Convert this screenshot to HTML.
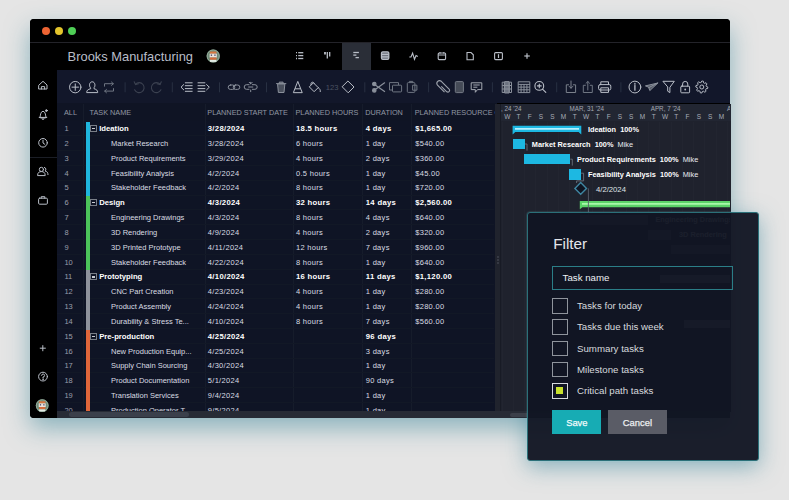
<!DOCTYPE html>
<html><head><meta charset="utf-8">
<style>
*{margin:0;padding:0;box-sizing:border-box}
html,body{width:789px;height:500px;overflow:hidden;background:#e5e5e5;font-family:"Liberation Sans",sans-serif}
.abs{position:absolute}
#shadow{position:absolute;left:30px;top:19px;width:700px;height:399px;border-radius:4px;background:#000;box-shadow:0 10px 24px rgba(50,130,150,0.5);}
#win{position:absolute;left:30px;top:19px;width:700px;height:399px;border-radius:4px;background:#000;overflow:hidden}
#titlesep{position:absolute;left:30px;top:42px;width:700px;height:1px;background:#232329}
.tl{position:absolute;top:27px;width:8px;height:8px;border-radius:50%}
#brand{position:absolute;left:67.6px;top:48px;font-size:12.9px;color:#b9bec8;line-height:17px;white-space:nowrap}
#toolbar{position:absolute;left:57px;top:70px;width:673px;height:33px;background:#12172a}
#gridhdr{position:absolute;left:57px;top:103px;width:440px;height:18px;background:#0f1424}
#gridbody{position:absolute;left:57px;top:121px;width:440px;height:290px;background:#0f1425}
#splitter{position:absolute;left:495px;top:103.5px;width:5.5px;height:307.5px;background:#20232d;border-right:1px solid #181b25}
#gantt{position:absolute;left:500px;top:103.5px;width:230.5px;height:308px;background:#1f222d}
#ganttHdr{position:absolute;left:500px;top:103.5px;width:230.5px;height:17.5px;background:#222632}
#hscroll{position:absolute;left:57px;top:411px;width:673px;height:7px;background:#272b35}
#hthumb{position:absolute;left:69px;top:412px;width:120px;height:5px;border-radius:3px;background:#3b404b}
.hd{position:absolute;top:89px;font-size:7.3px;line-height:8px;color:#9197a3;white-space:nowrap}
.r{position:absolute;font-size:7.5px;line-height:14.82px;color:#dadde3;white-space:nowrap}
.b{font-weight:bold;color:#fff;font-size:7.7px}
.d{letter-spacing:0.3px}
.num{position:absolute;left:64.4px;font-size:7.5px;line-height:14.82px;color:#9a9fab}
.cb{position:absolute;left:86.3px;width:3.3px;height:14.92px}
.box{position:absolute;left:90.2px;width:6.8px;height:7px;border:0.9px solid #7a7f88}
.box:after{content:"";position:absolute;left:0.9px;top:2.1px;width:3.2px;height:1.1px;background:#c9ccd2}
.rl{position:absolute;left:57px;width:437px;height:1px;background:#121826}
.coldiv{position:absolute;top:104px;width:1px;height:307px;background:#161c2b}
.wd{position:absolute;top:113px;width:11.27px;text-align:center;font-size:6.5px;line-height:8px;color:#a8adb8}
.gl{position:absolute;font-size:7.35px;line-height:14.8px;color:#e9ecf0;white-space:nowrap}
.gl b{font-weight:bold;color:#fff}
.gd{position:absolute;top:105px;font-size:6.3px;line-height:8px;color:#a3a8b3;white-space:nowrap}
#dshadow{position:absolute;left:526.5px;top:211.5px;width:232.5px;height:249px;border-radius:3px;background:transparent;box-shadow:0 6px 22px rgba(60,135,155,0.55)}
#dlg{position:absolute;left:526.5px;top:211.5px;width:232.5px;height:249px;border:1.4px solid #2b7079;border-radius:3px;background:rgba(17,21,35,0.955);box-shadow:0 0 1.5px rgba(130,215,225,0.6)}
#ftitle{position:absolute;left:553.2px;top:234.6px;font-size:15.3px;line-height:18px;color:#e3e6ea}
#finput{position:absolute;left:552.2px;top:265.6px;width:180.7px;height:24px;border:1.4px solid #2b7e87;font-size:9.7px;line-height:21.2px;padding-left:9.4px;color:#eef0f3}
.chk{position:absolute;left:552.2px;width:15.7px;height:15.6px;border:1.3px solid #8f949c}
.chk.on{border-color:#d6d9de}
.chk.on:after{content:"";position:absolute;left:3.3px;top:3.3px;width:6.5px;height:6.5px;background:#c9e22c}
.fl{position:absolute;left:577px;font-size:9.7px;line-height:15.6px;color:#d7dade;white-space:nowrap}
#save{position:absolute;left:552.4px;top:410.2px;width:48.9px;height:23.6px;background:#17acb4;color:#f2fbfb;font-size:9.4px;-webkit-text-stroke:0.25px #f2fbfb;line-height:25.4px;text-align:center}
#cancel{position:absolute;left:607.9px;top:410.2px;width:59px;height:23.6px;background:#5a5c66;color:#eceef0;font-size:9.4px;-webkit-text-stroke:0.25px #eceef0;line-height:25.4px;text-align:center}
.vl{position:absolute;top:121.5px;width:1px;height:290px;background:#222530}
</style></head><body>
<div id="dshadow"></div>
<div id="shadow"></div>
<div id="win"></div>
  <div class="tl" style="left:42px;background:#ee6433"></div>
  <div class="tl" style="left:55px;background:#e4c52c"></div>
  <div class="tl" style="left:68px;background:#4fcf56"></div>
  <div id="titlesep"></div>
  <div id="brand">Brooks Manufacturing</div>
  <div id="toolbar"></div>
  <div id="gridhdr"></div>
  <div id="gridbody"></div>
  <div id="gantt"></div>
  <div id="ganttHdr"></div>
  <div id="splitter"></div>
  <div id="hscroll"></div>
  <div id="hthumb"></div>
  <div class="abs" style="left:497.2px;top:256.3px;width:1.8px;height:1.8px;border-radius:50%;background:#3d404b"></div>
  <div class="abs" style="left:497.2px;top:259.3px;width:1.8px;height:1.8px;border-radius:50%;background:#3d404b"></div>
  <div class="abs" style="left:497.2px;top:262.3px;width:1.8px;height:1.8px;border-radius:50%;background:#3d404b"></div>
  <div class="abs" style="left:510px;top:413.2px;width:60px;height:3.8px;border-radius:2px;background:#3b3f49"></div>
  <div class="abs" style="left:342.3px;top:42.5px;width:28.4px;height:27.5px;background:#2a2e37"></div>
  <div class="abs" style="left:30px;top:157px;width:27px;height:1px;background:#1b1e26"></div>
  <div class="coldiv" style="left:82.9px"></div>
  <div class="coldiv" style="left:204.6px"></div>
  <div class="coldiv" style="left:293px"></div>
  <div class="coldiv" style="left:362px"></div>
  <div class="coldiv" style="left:410.5px"></div>
<div class="abs" style="left:0;top:0;width:495px;height:500px;overflow:hidden">
  <div class="hd" style="left:64px;top:108.8px">ALL</div>
  <div class="hd" style="left:89.5px;top:108.8px">TASK NAME</div>
  <div class="hd" style="left:207.3px;top:108.8px">PLANNED START DATE</div>
  <div class="hd" style="left:295.5px;top:108.8px">PLANNED HOURS</div>
  <div class="hd" style="left:365.3px;top:108.8px">DURATION</div>
  <div class="hd" style="left:414.7px;top:108.8px">PLANNED RESOURCE C</div>
</div>
<div class="abs" style="left:0;top:0;width:789px;height:411px;overflow:hidden">
<div class="rl" style="top:135.32px"></div>
<div class="num" style="top:122.20px">1</div>
<div class="cb" style="top:122.20px;background:#1fb6de"></div>
<div class="box" style="top:125.20px"></div>
<div class="r b" style="top:122.20px;left:99.2px">Ideation</div>
<div class="r b d" style="top:122.20px;left:207.8px">3/28/2024</div>
<div class="r b d" style="top:122.20px;left:296px">18.5 hours</div>
<div class="r b d" style="top:122.20px;left:365.8px">4 days</div>
<div class="r b d" style="top:122.20px;left:415.2px">$1,665.00</div>
<div class="rl" style="top:150.14px"></div>
<div class="num" style="top:137.02px">2</div>
<div class="cb" style="top:137.02px;background:#1fb6de"></div>
<div class="r" style="top:137.02px;left:111px">Market Research</div>
<div class="r d" style="top:137.02px;left:207.8px">3/28/2024</div>
<div class="r d" style="top:137.02px;left:296px">6 hours</div>
<div class="r d" style="top:137.02px;left:365.8px">1 day</div>
<div class="r d" style="top:137.02px;left:415.2px">$540.00</div>
<div class="rl" style="top:164.96px"></div>
<div class="num" style="top:151.84px">3</div>
<div class="cb" style="top:151.84px;background:#1fb6de"></div>
<div class="r" style="top:151.84px;left:111px">Product Requirements</div>
<div class="r d" style="top:151.84px;left:207.8px">3/29/2024</div>
<div class="r d" style="top:151.84px;left:296px">4 hours</div>
<div class="r d" style="top:151.84px;left:365.8px">2 days</div>
<div class="r d" style="top:151.84px;left:415.2px">$360.00</div>
<div class="rl" style="top:179.78px"></div>
<div class="num" style="top:166.66px">4</div>
<div class="cb" style="top:166.66px;background:#1fb6de"></div>
<div class="r" style="top:166.66px;left:111px">Feasibility Analysis</div>
<div class="r d" style="top:166.66px;left:207.8px">4/2/2024</div>
<div class="r d" style="top:166.66px;left:296px">0.5 hours</div>
<div class="r d" style="top:166.66px;left:365.8px">1 day</div>
<div class="r d" style="top:166.66px;left:415.2px">$45.00</div>
<div class="rl" style="top:194.60px"></div>
<div class="num" style="top:181.48px">5</div>
<div class="cb" style="top:181.48px;background:#1fb6de"></div>
<div class="r" style="top:181.48px;left:111px">Stakeholder Feedback</div>
<div class="r d" style="top:181.48px;left:207.8px">4/2/2024</div>
<div class="r d" style="top:181.48px;left:296px">8 hours</div>
<div class="r d" style="top:181.48px;left:365.8px">1 day</div>
<div class="r d" style="top:181.48px;left:415.2px">$720.00</div>
<div class="rl" style="top:209.42px"></div>
<div class="num" style="top:196.30px">6</div>
<div class="cb" style="top:196.30px;background:#4cc35a"></div>
<div class="box" style="top:199.30px"></div>
<div class="r b" style="top:196.30px;left:99.2px">Design</div>
<div class="r b d" style="top:196.30px;left:207.8px">4/3/2024</div>
<div class="r b d" style="top:196.30px;left:296px">32 hours</div>
<div class="r b d" style="top:196.30px;left:365.8px">14 days</div>
<div class="r b d" style="top:196.30px;left:415.2px">$2,560.00</div>
<div class="rl" style="top:224.24px"></div>
<div class="num" style="top:211.12px">7</div>
<div class="cb" style="top:211.12px;background:#4cc35a"></div>
<div class="r" style="top:211.12px;left:111px">Engineering Drawings</div>
<div class="r d" style="top:211.12px;left:207.8px">4/3/2024</div>
<div class="r d" style="top:211.12px;left:296px">8 hours</div>
<div class="r d" style="top:211.12px;left:365.8px">4 days</div>
<div class="r d" style="top:211.12px;left:415.2px">$640.00</div>
<div class="rl" style="top:239.06px"></div>
<div class="num" style="top:225.94px">8</div>
<div class="cb" style="top:225.94px;background:#4cc35a"></div>
<div class="r" style="top:225.94px;left:111px">3D Rendering</div>
<div class="r d" style="top:225.94px;left:207.8px">4/9/2024</div>
<div class="r d" style="top:225.94px;left:296px">4 hours</div>
<div class="r d" style="top:225.94px;left:365.8px">2 days</div>
<div class="r d" style="top:225.94px;left:415.2px">$320.00</div>
<div class="rl" style="top:253.88px"></div>
<div class="num" style="top:240.76px">9</div>
<div class="cb" style="top:240.76px;background:#4cc35a"></div>
<div class="r" style="top:240.76px;left:111px">3D Printed Prototype</div>
<div class="r d" style="top:240.76px;left:207.8px">4/11/2024</div>
<div class="r d" style="top:240.76px;left:296px">12 hours</div>
<div class="r d" style="top:240.76px;left:365.8px">7 days</div>
<div class="r d" style="top:240.76px;left:415.2px">$960.00</div>
<div class="rl" style="top:268.70px"></div>
<div class="num" style="top:255.58px">10</div>
<div class="cb" style="top:255.58px;background:#4cc35a"></div>
<div class="r" style="top:255.58px;left:111px">Stakeholder Feedback</div>
<div class="r d" style="top:255.58px;left:207.8px">4/22/2024</div>
<div class="r d" style="top:255.58px;left:296px">8 hours</div>
<div class="r d" style="top:255.58px;left:365.8px">1 day</div>
<div class="r d" style="top:255.58px;left:415.2px">$640.00</div>
<div class="rl" style="top:283.52px"></div>
<div class="num" style="top:270.40px">11</div>
<div class="cb" style="top:270.40px;background:#8e929b"></div>
<div class="box" style="top:273.40px"></div>
<div class="r b" style="top:270.40px;left:99.2px">Prototyping</div>
<div class="r b d" style="top:270.40px;left:207.8px">4/10/2024</div>
<div class="r b d" style="top:270.40px;left:296px">16 hours</div>
<div class="r b d" style="top:270.40px;left:365.8px">11 days</div>
<div class="r b d" style="top:270.40px;left:415.2px">$1,120.00</div>
<div class="rl" style="top:298.34px"></div>
<div class="num" style="top:285.22px">12</div>
<div class="cb" style="top:285.22px;background:#8e929b"></div>
<div class="r" style="top:285.22px;left:111px">CNC Part Creation</div>
<div class="r d" style="top:285.22px;left:207.8px">4/23/2024</div>
<div class="r d" style="top:285.22px;left:296px">4 hours</div>
<div class="r d" style="top:285.22px;left:365.8px">1 day</div>
<div class="r d" style="top:285.22px;left:415.2px">$280.00</div>
<div class="rl" style="top:313.16px"></div>
<div class="num" style="top:300.04px">13</div>
<div class="cb" style="top:300.04px;background:#8e929b"></div>
<div class="r" style="top:300.04px;left:111px">Product Assembly</div>
<div class="r d" style="top:300.04px;left:207.8px">4/24/2024</div>
<div class="r d" style="top:300.04px;left:296px">4 hours</div>
<div class="r d" style="top:300.04px;left:365.8px">1 day</div>
<div class="r d" style="top:300.04px;left:415.2px">$280.00</div>
<div class="rl" style="top:327.98px"></div>
<div class="num" style="top:314.86px">14</div>
<div class="cb" style="top:314.86px;background:#8e929b"></div>
<div class="r" style="top:314.86px;left:111px">Durability &amp; Stress Te...</div>
<div class="r d" style="top:314.86px;left:207.8px">4/10/2024</div>
<div class="r d" style="top:314.86px;left:296px">8 hours</div>
<div class="r d" style="top:314.86px;left:365.8px">7 days</div>
<div class="r d" style="top:314.86px;left:415.2px">$560.00</div>
<div class="rl" style="top:342.80px"></div>
<div class="num" style="top:329.68px">15</div>
<div class="cb" style="top:329.68px;background:#e0663a"></div>
<div class="box" style="top:332.68px"></div>
<div class="r b" style="top:329.68px;left:99.2px">Pre-production</div>
<div class="r b d" style="top:329.68px;left:207.8px">4/25/2024</div>
<div class="r b d" style="top:329.68px;left:365.8px">96 days</div>
<div class="rl" style="top:357.62px"></div>
<div class="num" style="top:344.50px">16</div>
<div class="cb" style="top:344.50px;background:#e0663a"></div>
<div class="r" style="top:344.50px;left:111px">New Production Equip...</div>
<div class="r d" style="top:344.50px;left:207.8px">4/25/2024</div>
<div class="r d" style="top:344.50px;left:365.8px">3 days</div>
<div class="rl" style="top:372.44px"></div>
<div class="num" style="top:359.32px">17</div>
<div class="cb" style="top:359.32px;background:#e0663a"></div>
<div class="r" style="top:359.32px;left:111px">Supply Chain Sourcing</div>
<div class="r d" style="top:359.32px;left:207.8px">4/30/2024</div>
<div class="r d" style="top:359.32px;left:365.8px">1 day</div>
<div class="rl" style="top:387.26px"></div>
<div class="num" style="top:374.14px">18</div>
<div class="cb" style="top:374.14px;background:#e0663a"></div>
<div class="r" style="top:374.14px;left:111px">Product Documentation</div>
<div class="r d" style="top:374.14px;left:207.8px">5/1/2024</div>
<div class="r d" style="top:374.14px;left:365.8px">90 days</div>
<div class="rl" style="top:402.08px"></div>
<div class="num" style="top:388.96px">19</div>
<div class="cb" style="top:388.96px;background:#e0663a"></div>
<div class="r" style="top:388.96px;left:111px">Translation Services</div>
<div class="r d" style="top:388.96px;left:207.8px">9/4/2024</div>
<div class="r d" style="top:388.96px;left:365.8px">1 day</div>
<div class="rl" style="top:416.90px"></div>
<div class="num" style="top:403.78px">20</div>
<div class="cb" style="top:403.78px;background:#e0663a"></div>
<div class="r" style="top:403.78px;left:111px">Production Operator T...</div>
<div class="r d" style="top:403.78px;left:207.8px">9/5/2024</div>
<div class="r d" style="top:403.78px;left:365.8px">1 day</div>
</div>
<div class="abs" style="left:497.5px;top:0;width:232.5px;height:411px;overflow:hidden">
<div class="abs" style="left:-497.5px;top:0;width:789px;height:500px">
<div class="wd" style="left:501.60px">W</div>
<div class="vl" style="left:501.60px"></div>
<div class="wd" style="left:512.87px">T</div>
<div class="vl" style="left:512.87px"></div>
<div class="wd" style="left:524.14px">F</div>
<div class="vl" style="left:524.14px"></div>
<div class="wd" style="left:535.41px">S</div>
<div class="vl" style="left:535.41px"></div>
<div class="wd" style="left:546.68px">S</div>
<div class="vl" style="left:546.68px"></div>
<div class="wd" style="left:557.95px">M</div>
<div class="vl" style="left:557.95px"></div>
<div class="wd" style="left:569.22px">T</div>
<div class="vl" style="left:569.22px"></div>
<div class="wd" style="left:580.49px">W</div>
<div class="vl" style="left:580.49px"></div>
<div class="wd" style="left:591.76px">T</div>
<div class="vl" style="left:591.76px"></div>
<div class="wd" style="left:603.03px">F</div>
<div class="vl" style="left:603.03px"></div>
<div class="wd" style="left:614.30px">S</div>
<div class="vl" style="left:614.30px"></div>
<div class="wd" style="left:625.57px">S</div>
<div class="vl" style="left:625.57px"></div>
<div class="wd" style="left:636.84px">M</div>
<div class="vl" style="left:636.84px"></div>
<div class="wd" style="left:648.11px">T</div>
<div class="vl" style="left:648.11px"></div>
<div class="wd" style="left:659.38px">W</div>
<div class="vl" style="left:659.38px"></div>
<div class="wd" style="left:670.65px">T</div>
<div class="vl" style="left:670.65px"></div>
<div class="wd" style="left:681.92px">F</div>
<div class="vl" style="left:681.92px"></div>
<div class="wd" style="left:693.19px">S</div>
<div class="vl" style="left:693.19px"></div>
<div class="wd" style="left:704.46px">S</div>
<div class="vl" style="left:704.46px"></div>
<div class="wd" style="left:715.73px">M</div>
<div class="vl" style="left:715.73px"></div>
<div class="wd" style="left:727.00px">T</div>
<div class="vl" style="left:727.00px"></div>
<div class="gd" style="left:501px">, 24 '24</div>
<div class="gd" style="left:569.5px">MAR, 31 '24</div>
<div class="gd" style="left:650.7px">APR, 7 '24</div>
<div class="gd" style="left:727px">A</div>
<svg class="abs" style="left:0;top:0" width="789" height="500"><path d="M512.6,125.7 H581.3 V134.6 L578.6,132 H515.3 L512.6,134.6 Z" fill="#1db8e2"/><line x1="515" y1="128.9" x2="579" y2="128.9" stroke="#b6f0ff" stroke-width="1.8"/><path d="M579.8,200.9 H731 V207.3 H582.4 L579.8,209.3 Z" fill="#5bd368"/><line x1="582" y1="203.8" x2="731" y2="203.8" stroke="#a8f7aa" stroke-width="1.8"/><path d="M525,144 H527 V150.6" stroke="#6a707c" stroke-width="0.9" fill="none"/><path d="M570.3,159.2 H572.3 V165.6" stroke="#6a707c" stroke-width="0.9" fill="none"/><path d="M581.1,173.2 H583.6 V180.9 H576.6 V183" stroke="#6a707c" stroke-width="0.9" fill="none"/><path d="M588.4,188.4 V215" stroke="#5a606c" stroke-width="0.9" fill="none"/><path d="M580.7,182.6 L586.5,188.4 L580.7,194.2 L574.9,188.4 Z" fill="#0f1522" stroke="#3f86a2" stroke-width="1.4"/></svg>
<div class="abs" style="left:512.9px;top:138.8px;width:12.00px;height:10.60px;background:#1db8e2"></div>
<div class="abs" style="left:523.8px;top:154px;width:46.50px;height:10.40px;background:#1db8e2"></div>
<div class="abs" style="left:568.6px;top:169px;width:12.50px;height:10.60px;background:#1db8e2"></div>
<div class="abs" style="left:579.8px;top:215px;width:68.60px;height:10.00px;background:#5a6470"></div>
<div class="abs" style="left:647.9px;top:230px;width:22.90px;height:9.50px;background:#5a6470"></div>
<div class="abs" style="left:670.8px;top:244.6px;width:60.20px;height:9.40px;background:#5a6470"></div>
<div class="gl b" style="left:655.4px;top:213px">Engineering Drawings</div>
<div class="gl b" style="left:679px;top:227.6px">3D Rendering</div>
<div class="abs" style="left:659.6px;top:275px;width:71.40px;height:7.70px;background:#8e939c"></div>
<div class="abs" style="left:684px;top:320.4px;width:47.00px;height:7.80px;background:#8e939c"></div>
<div class="gl" style="left:587.9px;top:122.7px"><b>Ideation</b>&nbsp;&nbsp;<b>100%</b></div>
<div class="gl" style="left:531.8px;top:137.9px"><b>Market Research</b>&nbsp;&nbsp;<b>100%</b>&nbsp;&nbsp;Mike</div>
<div class="gl" style="left:577px;top:152.5px"><b>Product Requirements</b>&nbsp;&nbsp;<b>100%</b>&nbsp;&nbsp;Mike</div>
<div class="gl" style="left:587.9px;top:167.6px"><b>Feasibility Analysis</b>&nbsp;&nbsp;<b>100%</b>&nbsp;&nbsp;Mike</div>
<div class="gl" style="left:596px;top:182.8px;color:#dfe2e7;font-size:7.7px">4/2/2024</div>
</div></div>
<svg class="abs" style="left:0;top:0" width="789" height="500">
<g stroke="#b9bec7" stroke-width="1.3" fill="none" stroke-linecap="butt">
<line x1="296" y1="52.7" x2="297" y2="52.7"/><line x1="298.2" y1="52.7" x2="303.3" y2="52.7"/>
<line x1="296" y1="55.6" x2="297" y2="55.6"/><line x1="298.2" y1="55.6" x2="303.3" y2="55.6"/>
<line x1="296" y1="58.5" x2="297" y2="58.5"/><line x1="298.2" y1="58.5" x2="303.3" y2="58.5"/>
<line x1="325" y1="52" x2="325" y2="54.6" stroke-width="1.8"/><line x1="327.3" y1="52" x2="327.3" y2="58.6"/><line x1="329.7" y1="52" x2="329.7" y2="56.6"/>
<line x1="353.3" y1="52.5" x2="358.9" y2="52.5"/><line x1="353.3" y1="55.1" x2="356.4" y2="55.1"/><line x1="355.5" y1="57.6" x2="358.9" y2="57.6"/>
<rect x="381.5" y="51.8" width="7.3" height="7.6" rx="1.3" fill="#6c717b"/><line x1="381.5" y1="54.4" x2="388.8" y2="54.4"/><line x1="381.5" y1="56.9" x2="388.8" y2="56.9"/>
<polyline points="409.3,57 411,57 412.6,53.2 414.5,59.3 416,55.6 417.8,56.6" stroke-width="1.1"/>
<rect x="438.2" y="53" width="7.4" height="6.6" rx="1" stroke-width="1.1"/><line x1="438.2" y1="55" x2="445.6" y2="55" stroke-width="1"/><line x1="440" y1="52" x2="440" y2="53.6" stroke-width="1"/><line x1="443.8" y1="52" x2="443.8" y2="53.6" stroke-width="1"/>
<path d="M467,52.5 h4 l2.3,2.3 v5 h-6.3 z" stroke-width="1.1"/>
<rect x="494.6" y="52.6" width="7.8" height="7" rx="1" stroke-width="1.1"/><line x1="498.5" y1="54.2" x2="498.5" y2="58" stroke-width="1.2"/>
<line x1="524.3" y1="56" x2="529.8" y2="56" stroke-width="1.2"/><line x1="527" y1="53.3" x2="527" y2="58.7" stroke-width="1.2"/>
</g>
<g stroke="#b9bec7" stroke-width="1" fill="none" stroke-linecap="round" stroke-linejoin="round">
<circle cx="75.25" cy="87.15" r="5.7"/><line x1="72" y1="87.15" x2="78.5" y2="87.15"/><line x1="75.25" y1="83.9" x2="75.25" y2="90.4"/>
<path d="M90.3,87.6 C88.8,86.2 89.2,81.8 92.2,81.8 C95.2,81.8 95.6,86.2 94.1,87.6 L94.1,88.8 C96.6,89.4 97.7,90.4 97.7,92.6 L86.7,92.6 C86.7,90.4 87.8,89.4 90.3,88.8 Z"/>
</g>
<g stroke="#6f7682" stroke-width="1" fill="none" stroke-linecap="round" stroke-linejoin="round">
<path d="M104.5,86.2 V83.7 H113.3 M111.5,82 L113.3,83.7 L111.5,85.4"/><path d="M113.5,88.6 V91.1 H104.7 M106.5,89.4 L104.7,91.1 L106.5,92.8"/>
</g>
<line x1="125.1" y1="82.3" x2="125.1" y2="92.3" stroke="#283042" stroke-width="1"/>
<line x1="172.3" y1="82.3" x2="172.3" y2="92.3" stroke="#283042" stroke-width="1"/>
<line x1="219.5" y1="82.3" x2="219.5" y2="92.3" stroke="#283042" stroke-width="1"/>
<line x1="266.5" y1="82.3" x2="266.5" y2="92.3" stroke="#283042" stroke-width="1"/>
<line x1="364.8" y1="82.3" x2="364.8" y2="92.3" stroke="#283042" stroke-width="1"/>
<line x1="428.6" y1="82.3" x2="428.6" y2="92.3" stroke="#283042" stroke-width="1"/>
<line x1="492.4" y1="82.3" x2="492.4" y2="92.3" stroke="#283042" stroke-width="1"/>
<line x1="556.7" y1="82.3" x2="556.7" y2="92.3" stroke="#283042" stroke-width="1"/>
<line x1="620.9" y1="82.3" x2="620.9" y2="92.3" stroke="#283042" stroke-width="1"/>
<g stroke="#3b4150" stroke-width="1.1" fill="none" stroke-linecap="round">
<path d="M135.5,84.2 A5,5 0 1 1 134.6,89.8"/><path d="M134.2,81.8 L135.5,84.5 L138.4,83.8"/>
<path d="M160,84.2 A5,5 0 1 0 160.9,89.8"/><path d="M161.3,81.8 L160,84.5 L157.1,83.8"/>
</g>
<g stroke="#b9bec7" stroke-width="1" fill="none" stroke-linecap="round" stroke-linejoin="round">
<polyline points="183.7,84.6 181,87.2 183.7,89.8"/>
<line x1="185.3" y1="82.8" x2="192.2" y2="82.8"/>
<line x1="185.3" y1="85.7" x2="192.2" y2="85.7"/>
<line x1="185.3" y1="88.6" x2="192.2" y2="88.6"/>
<line x1="185.3" y1="91.3" x2="192.2" y2="91.3"/>
<polyline points="206.6,84.6 209.3,87.2 206.6,89.8"/>
<line x1="198" y1="82.8" x2="204.9" y2="82.8"/>
<line x1="198" y1="85.7" x2="204.9" y2="85.7"/>
<line x1="198" y1="88.6" x2="204.9" y2="88.6"/>
<line x1="198" y1="91.3" x2="204.9" y2="91.3"/>
</g>
<g stroke="#8a909b" stroke-width="1" fill="none" stroke-linecap="round" stroke-linejoin="round">
<rect x="228.2" y="85" width="6.6" height="4.4" rx="2.2"/><rect x="233.2" y="85" width="6.6" height="4.4" rx="2.2"/>
<path d="M249,84.7 h-2.5 a2.3,2.3 0 0 0 0,4.6 h2.5 M252.4,84.7 h2.5 a2.3,2.3 0 0 1 0,4.6 h-2.5 M248.6,87 h4.2 M250.7,82.3 v1.6 M250.7,90 v1.7 M249.2,82.3 l1.5,1.5 l1.5,-1.5"/>
<path d="M276.5,83.6 h9.4 M279.3,83.6 v-1.5 h3.8 v1.5 M277.6,84.5 l0.8,8 h5.6 l0.8,-8 Z" fill="#4a505d"/>
</g>
<g stroke="#b9bec7" stroke-width="1" fill="none" stroke-linecap="round" stroke-linejoin="round">
<path d="M293.5,92.3 L297.8,81.4 L302.1,92.3 Z M295.4,88.8 H300.2"/>
<path d="M309.6,86.6 L313.4,82.8 L318.2,87.6 L314.4,91.4 Z M311,84.6 C310.5,82 313,81.2 314.3,83.3 M318.3,87.6 C319.8,88.8 320.7,90.1 320.3,91.6"/>
<path d="M348.2,81.3 L354,87 L348.2,92.8 L342.4,87 Z"/>
</g>
<text x="325.8" y="90.1" font-family="Liberation Sans" font-size="7.6" fill="#4a5262">123</text>
<g stroke="#8a909b" stroke-width="1.2" fill="none" stroke-linecap="round">
<circle cx="374.3" cy="84" r="1.7" fill="#8a909b"/><circle cx="374.3" cy="90.4" r="1.7" fill="#8a909b"/><line x1="375.6" y1="85.2" x2="384.6" y2="91.5"/><line x1="375.6" y1="89.2" x2="384.6" y2="82.8"/>
</g>
<g stroke="#6f7682" stroke-width="1" fill="none" stroke-linejoin="round">
<path d="M392,90 H389.5 V82.6 H398.5 V85"/><rect x="392.5" y="85.2" width="9.1" height="6.7" rx="0.8"/>
<rect x="407.3" y="82.6" width="7.6" height="9.8" rx="1"/><path d="M409.4,82.6 v-1.2 h3.4 v1.2"/><rect x="412.6" y="85.2" width="4.3" height="5" />
<path d="M441.3,85.8 L446.8,91.3 A1.8,1.8 0 0 0 449.3,88.8 L441.3,80.8 A2.7,2.7 0 0 0 437.5,84.6 L444.5,91.6" stroke-width="1.1" stroke="#9ea3ad" transform="translate(0,0.5)"/>
<rect x="455.3" y="81.6" width="8.1" height="11" rx="1" fill="#454b57" stroke="#757b86"/>
<path d="M471.2,82.8 H481.8 V89.6 H477.5 L475.3,92.3 V89.6 H471.2 Z" stroke="#a5aab3"/><line x1="473.3" y1="85" x2="479.7" y2="85" stroke="#a5aab3"/><line x1="473.3" y1="87.2" x2="477.4" y2="87.2" stroke="#a5aab3"/>
</g>
<g stroke="#8a909b" stroke-width="1" fill="none" stroke-linejoin="round">
<path d="M502.2,82.2 H504.3 V92.5 H502.2 Z M509.3,82.2 H511.5 V92.5 H509.3 Z" /><rect x="504.6" y="81.6" width="4.5" height="11.4" fill="#6c7280"/>
<line x1="502.2" y1="85.5" x2="511.5" y2="85.5"/><line x1="502.2" y1="89" x2="511.5" y2="89"/>
<rect x="518.2" y="81.8" width="11.6" height="10.8"/>
<line x1="521.1" y1="84.4" x2="521.1" y2="92.6"/>
<line x1="524" y1="84.4" x2="524" y2="92.6"/>
<line x1="526.9" y1="84.4" x2="526.9" y2="92.6"/>
<line x1="518.2" y1="84.4" x2="529.8" y2="84.4"/>
<line x1="518.2" y1="87.1" x2="529.8" y2="87.1"/>
<line x1="518.2" y1="89.8" x2="529.8" y2="89.8"/>
</g>
<g stroke="#b9bec7" stroke-width="1.1" fill="none" stroke-linecap="round">
<circle cx="539.3" cy="85.9" r="4.4"/><line x1="542.5" y1="89.1" x2="545.8" y2="92.4"/><line x1="537.4" y1="85.9" x2="541.2" y2="85.9"/><line x1="539.3" y1="84" x2="539.3" y2="87.8"/>
</g>
<g stroke="#7a808b" stroke-width="1" fill="none" stroke-linejoin="round" stroke-linecap="round">
<path d="M568.6,84.8 H566.3 V92.5 H575.6 V84.8 H573.3"/><path d="M571,81 V88.2 M569.2,86.4 L571,88.2 L572.8,86.4"/>
</g>
<g stroke="#6f7682" stroke-width="1" fill="none" stroke-linejoin="round" stroke-linecap="round">
<path d="M585.4,85.3 H583.3 V92.5 H592.3 V85.3 H590.2"/><path d="M587.8,90 V81.5 M586,83.3 L587.8,81.5 L589.6,83.3"/>
</g>
<g stroke="#b9bec7" stroke-width="1" fill="none" stroke-linejoin="round" stroke-linecap="round">
<path d="M600.8,84.6 V81.8 H608.5 V84.6"/><rect x="598.6" y="84.6" width="12.2" height="5.4" rx="1.5"/><path d="M600.8,88.2 V92.4 H608.5 V88.2 Z"/>
<circle cx="634.9" cy="87.05" r="5.9"/><line x1="634.9" y1="85.6" x2="634.9" y2="90.2" stroke-width="1.3"/><line x1="634.9" y1="83.4" x2="634.9" y2="84.2" stroke-width="1.3"/>
</g>
<g stroke="#8a909b" stroke-width="1" fill="none" stroke-linejoin="round" stroke-linecap="round">
<path d="M645.8,85.8 L657.8,83 L649.8,90.6 L648.8,87.6 Z M648.8,87.6 L657.8,83" fill="#555b68"/>
</g>
<g stroke="#b9bec7" stroke-width="1" fill="none" stroke-linejoin="round" stroke-linecap="round">
<path d="M663.3,81.3 H674.3 L669.9,87.3 V92.6 L667.7,91.2 V87.3 Z"/>
<rect x="680.8" y="86.2" width="8.8" height="6.6" rx="0.8"/><path d="M682.6,86.2 V84 A2.6,2.6 0 0 1 687.8,84 V86.2"/>
</g>
<circle cx="685.2" cy="89.5" r="0.9" fill="#b9bec7"/>
<polygon points="707.80,87.00 707.75,87.78 707.60,88.55 706.05,88.76 705.78,89.30 705.45,89.80 706.04,91.24 705.45,91.76 704.80,92.20 703.56,91.25 702.99,91.44 702.40,91.56 701.80,93.00 701.02,92.95 700.25,92.80 700.04,91.25 699.50,90.98 699.00,90.65 697.56,91.24 697.04,90.65 696.60,90.00 697.55,88.76 697.36,88.19 697.24,87.60 695.80,87.00 695.85,86.22 696.00,85.45 697.55,85.24 697.82,84.70 698.15,84.20 697.56,82.76 698.15,82.24 698.80,81.80 700.04,82.75 700.61,82.56 701.20,82.44 701.80,81.00 702.58,81.05 703.35,81.20 703.56,82.75 704.10,83.02 704.60,83.35 706.04,82.76 706.56,83.35 707.00,84.00 706.05,85.24 706.24,85.81 706.36,86.40" stroke="#b9bec7" stroke-width="1" fill="none" stroke-linejoin="round"/>
<circle cx="701.8" cy="87" r="2" stroke="#b9bec7" stroke-width="1" fill="none"/>
<g stroke="#b9bec7" stroke-width="1" fill="none" stroke-linejoin="round" stroke-linecap="round">
<path d="M39,85 L43,81.3 L47,85 V89 H39 Z M41.4,89 V86.6 H44.6 V89"/>
<path d="M40,117.4 C40.6,115.6 40.2,111.8 43,111.2 C45.8,111.8 45.4,115.6 46,117.4 Z M39.2,117.4 H46.8 M42,118.6 A1,1 0 0 0 44,118.6"/><circle cx="46.4" cy="110.6" r="0.9" fill="#b9bec7"/>
<circle cx="43" cy="142.8" r="4.3"/><path d="M43,140.3 V143 L44.8,144.3"/>
<circle cx="41.4" cy="169.4" r="2.1"/><path d="M37.6,175.2 C37.6,172.4 39.2,171.6 41.4,171.6 C43.6,171.6 45.2,172.4 45.2,175.2 Z"/><path d="M44.4,167.4 A2,2 0 0 1 45,171 C47,171.4 48,172.4 48,174.6"/>
<rect x="38.6" y="198.2" width="8.8" height="6" rx="1"/><path d="M41.2,198.2 V196.7 H44.8 V198.2"/>
<line x1="40.2" y1="348.2" x2="45.4" y2="348.2"/><line x1="42.8" y1="345.6" x2="42.8" y2="350.8"/>
<circle cx="43" cy="376.6" r="4.4"/><path d="M41.6,375.4 A1.5,1.5 0 1 1 43,377 V377.8"/><circle cx="43" cy="379.2" r="0.3"/>
</g>
</svg>
<svg class="abs" style="left:0;top:0" width="789" height="500"><circle cx="213.2" cy="56" r="6.6" fill="#6d8a76"/><circle cx="213.2" cy="56" r="6.10" fill="none" stroke="#9fb5a6" stroke-width="0.8"/><rect x="209.80" y="51.40" width="6.80" height="2.40" rx="1.00" fill="#d9763f"/><rect x="209.60" y="53.70" width="7.20" height="3.80" fill="#ece2dc"/><rect x="210.80" y="54.40" width="1.30" height="1.60" fill="#5a5f7a"/><rect x="214.30" y="54.40" width="1.30" height="1.60" fill="#5a5f7a"/><rect x="209.80" y="57.50" width="6.80" height="2.30" rx="0.80" fill="#d46b3a"/><rect x="210.00" y="59.90" width="6.40" height="2.00" fill="#e3ece6"/></svg>
<svg class="abs" style="left:0;top:0" width="789" height="500"><circle cx="42.2" cy="405.6" r="6.4" fill="#6d8a76"/><circle cx="42.2" cy="405.6" r="5.90" fill="none" stroke="#9fb5a6" stroke-width="0.8"/><rect x="38.90" y="401.14" width="6.59" height="2.33" rx="0.97" fill="#d9763f"/><rect x="38.71" y="403.37" width="6.98" height="3.68" fill="#ece2dc"/><rect x="39.87" y="404.05" width="1.26" height="1.55" fill="#5a5f7a"/><rect x="43.27" y="404.05" width="1.26" height="1.55" fill="#5a5f7a"/><rect x="38.90" y="407.05" width="6.59" height="2.23" rx="0.78" fill="#d46b3a"/><rect x="39.10" y="409.38" width="6.21" height="1.94" fill="#e3ece6"/></svg>
<div id="dlg"></div>
  <div id="ftitle">Filter</div>
  <div id="finput">Task name</div>
  <div class="chk" style="top:298px"></div><div class="fl" style="top:298px">Tasks for today</div>
  <div class="chk" style="top:319.3px"></div><div class="fl" style="top:319.3px">Tasks due this week</div>
  <div class="chk" style="top:340.6px"></div><div class="fl" style="top:340.6px">Summary tasks</div>
  <div class="chk" style="top:361.9px"></div><div class="fl" style="top:361.9px">Milestone tasks</div>
  <div class="chk on" style="top:383.2px"></div><div class="fl" style="top:383.2px">Critical path tasks</div>
  <div id="save">Save</div>
  <div id="cancel">Cancel</div>
</body></html>
